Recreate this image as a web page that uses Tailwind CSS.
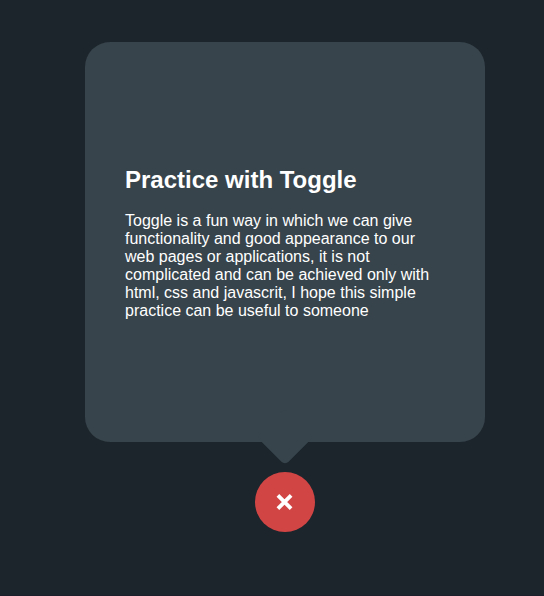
<!DOCTYPE html>
<html lang="en">
<head>
<meta charset="utf-8">
<title>Practice with Toggle</title>
<script src="https://cdn.jsdelivr.net/npm/@tailwindcss/browser@4"></script>
</head>
<body class="h-screen overflow-hidden border-b border-[#1c1f2b] bg-[#1d252c] font-['Liberation_Sans',Arial,sans-serif] text-white">
<main class="flex flex-col items-center pt-[42px] ml-[26px]">
<section class="relative flex h-[400px] w-[400px] flex-col justify-center rounded-[25px] bg-[#37444b] px-10 pt-[2px]">
<h2 class="text-2xl leading-[27px] font-bold">Practice with Toggle</h2>
<p class="mt-[19px] text-base leading-[18px]">Toggle is a fun way in which we can give functionality and good appearance to our web pages or applications, it is not complicated and can be achieved only with html, css and javascrit, I hope this simple practice can be useful to someone</p>
<span class="absolute -bottom-[15px] left-[180px] h-10 w-10 rotate-45 rounded-[5px] bg-[#37444b]"></span>
</section>
<button class="mt-[30px] flex h-[60px] w-[60px] items-center justify-center rounded-full bg-[#d24545]" aria-label="Close">
<svg class="h-[18px] w-[18px]" viewBox="0 0 18 18" fill="none" stroke="white" stroke-width="3.8"><path d="M1.9 2.4 15.1 15.6M15.1 2.4 1.9 15.6"/></svg>
</button>
</main>
</body>
</html>
